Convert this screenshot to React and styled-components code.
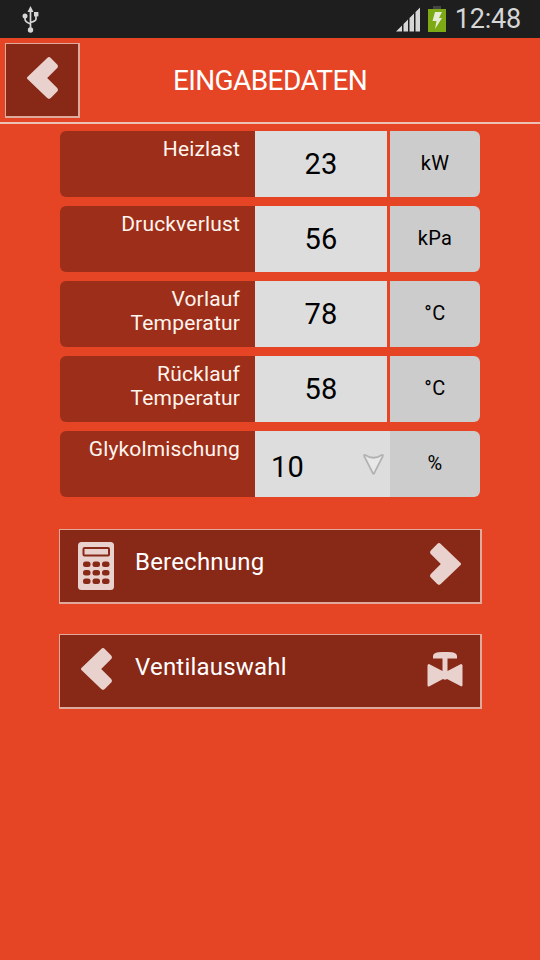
import React, { useState } from "react";
import styled, { createGlobalStyle } from "styled-components";

const GlobalStyle = createGlobalStyle`
  body {
    margin: 0;
    background-color: #e54525;
    font-family: Roboto, "Liberation Sans", sans-serif;
  }
`;

const Screen = styled.div`
  width: 540px;
  height: 960px;
  overflow: hidden;
  background-color: #e54525;
`;

const StatusBar = styled.div`
  display: flex;
  align-items: center;
  height: 38px;
  box-sizing: border-box;
  padding: 0 19px 0 22px;
  background-color: #1e1e1e;
  color: #d6d6d6;
`;

const StatusIcons = styled.div`
  display: flex;
  gap: 8px;
  margin-left: auto;
`;

const Clock = styled.span`
  margin-left: 9px;
  font-size: 27px;
  line-height: 38px;
  letter-spacing: -0.2px;
`;

const Header = styled.header`
  display: grid;
  grid-template-columns: 75px 1fr 75px;
  height: 86px;
  box-sizing: border-box;
  padding: 5px 5px 0;
  border-bottom: 2px solid #ecc0b4;
`;

const Title = styled.h1`
  margin: 0;
  color: #ffffff;
  font-size: 28px;
  font-weight: 400;
  line-height: 75px;
  text-align: center;
  letter-spacing: -0.6px;
`;

const BoxButton = styled.button`
  display: flex;
  align-items: center;
  box-sizing: border-box;
  height: 75px;
  padding: 0;
  border: solid #dfa99c;
  border-width: 1px 2px 2px 1px;
  background-color: #882817;
  color: #ffffff;
  font-family: inherit;
  cursor: pointer;
`;

const BackButton = styled(BoxButton)`
  width: 75px;
  padding: 0 0 4px 21px;
`;

const NavButton = styled(BoxButton)`
  width: 423px;
  padding: 0 16px 0 17px;
`;

const NavIcon = styled.span`
  display: flex;
  justify-content: center;
  width: 38px;
  padding-bottom: ${(props) => props.$lift || "0"};
`;

const NavLabel = styled.span`
  flex: 1;
  padding: 0 0 9px 20px;
  font-size: 24px;
  line-height: 30px;
  text-align: left;
  letter-spacing: 0.2px;
`;

const Form = styled.div`
  display: flex;
  flex-direction: column;
  gap: 9px;
  width: 420px;
  margin: 7px auto 0;
`;

const Row = styled.div`
  display: grid;
  grid-template-columns: 195px 1fr 90px;
  height: 66px;
  border-radius: 6px;
  overflow: hidden;
`;

const Label = styled.label`
  padding: 6px 15px 0 20px;
  background-color: #9d2f1a;
  color: #fff5ee;
  font-size: 21px;
  line-height: 24px;
  text-align: right;
  letter-spacing: 0.17px;
  white-space: pre-line;
`;

const Value = styled.div`
  display: flex;
  align-items: center;
  justify-content: ${(props) => (props.$select ? "space-between" : "center")};
  box-sizing: border-box;
  margin-right: ${(props) => (props.$select ? "0" : "3px")};
  padding: ${(props) => (props.$select ? "5px 6px 0 16px" : "0")};
  background-color: #dddddd;
  color: #000000;
  font-size: 29px;
  letter-spacing: 0.3px;
`;

const Unit = styled.div`
  background-color: #cccccc;
  color: #000000;
  font-size: 20px;
  line-height: 64px;
  text-align: center;
  letter-spacing: 0.4px;
`;

const Actions = styled.div`
  display: flex;
  flex-direction: column;
  align-items: flex-start;
  gap: 30px;
  margin: 32px 0 0 59px;
`;

const Chevron = ({ right }) => (
  <svg width="31" height="42" viewBox="0 0 31 42">
    <path
      transform={right ? "translate(31 0) scale(-1 1)" : undefined}
      d="M.4 20 20.2.9Q22 -.7 23.8.9L30.2 7.400Q31.7 9.200 30.2 11L20.200 21 30.2 31Q31.7 32.800 30.2 34.600L23.8 41.1Q22 42.7 20.2 41.1L.4 22Q-.5 21 .4 20Z"
      fill="#e9d2cd"
    />
  </svg>
);

const Calculator = () => (
  <svg width="36" height="48" viewBox="0 0 36 48">
    <rect width="36" height="48" rx="3.5" fill="#e9d2cd" />
    <rect x="5.5" y="6" width="25.5" height="7.5" rx="1" fill="none" stroke="#882817" strokeWidth="2" />
    {[19.5, 28, 36.5].map((y) =>
      [5, 14.5, 24].map((x) => (
        <rect key={`${x}-${y}`} x={x} y={y} width="7.5" height="5.5" rx="2.5" fill="#882817" />
      ))
    )}
  </svg>
);

const Valve = () => (
  <svg width="36" height="36" viewBox="0 0 36 36">
    <path
      fill="#e9d2cd"
      d="M6 6.5V4Q6.500 .8 11 .3 18 -.4 25 .3 29.500 .8 30 4V6.500H20.500V19L34 12Q35.500 12 35.500 13.500V33Q35.500 34.800 34 34.300L20 27Q18 28.500 16 27L2 34.500Q.5 35 .5 33V13.500Q.5 12 2 12L15.500 19V6.500Z"
    />
  </svg>
);

const UsbIcon = () => (
  <svg width="17" height="27" viewBox="0 0 17 27" fill="none" stroke="#d6d6d6" strokeWidth="1.7">
    <path d="M8.500 3V24M3 9V13Q3 16 8.500 18M14 8V13Q14 15 8.500 16.500" />
    <g fill="#d6d6d6" stroke="none">
      <path d="M8.500 0 11.500 6H5.500Z" />
      <circle cx="3" cy="10" r="2.500" />
      <rect x="12" y="6" width="4.400" height="4.400" />
      <circle cx="8.500" cy="24" r="2.700" />
    </g>
  </svg>
);

const SignalIcon = () => (
  <svg width="24" height="26" viewBox="0 -1.500 24 26" fill="#d6d6d6">
    <path d="M0 24 6 18V24H0ZM7.500 16.500 12 12V24H7.500ZM13.500 10.500 18 6V24H13.500ZM19.500 4.500 24 0V24H19.500Z" />
  </svg>
);

const BatteryIcon = () => (
  <svg width="18" height="26" viewBox="0 0 18 26">
    <rect x="5" width="8" height="3" fill="#444444" />
    <rect y="3" width="18" height="23" fill="#7da915" />
    <path d="M7 6 14 6 11 12H14L7 23 8.500 15H4.500Z" fill="#e6ecd5" />
  </svg>
);

const DropArrow = () => (
  <svg width="21" height="27" viewBox="0 0 21 27">
    <path
      d="M2.200 2 Q10.500 7.500 18.800 2 20.300 1.600 19.700 3.300L11.200 20.200Q10.500 21.300 9.800 20.200L1.300 3.300Q.7 1.600 2.200 2Z"
      fill="#e8e8e8"
      stroke="#b2b2b2"
      strokeWidth="1.800"
      strokeLinejoin="round"
    />
  </svg>
);

const fields = [
  { label: "Heizlast", value: "23", unit: "kW" },
  { label: "Druckverlust", value: "56", unit: "kPa" },
  { label: "Vorlauf\nTemperatur", value: "78", unit: "°C" },
  { label: "Rücklauf\nTemperatur", value: "58", unit: "°C" },
  { label: "Glykolmischung", value: "10", unit: "%", select: true },
];

const App = () => {
  const [data] = useState(fields);

  return (
    <Screen>
      <GlobalStyle />
      <StatusBar>
        <UsbIcon />
        <StatusIcons>
          <SignalIcon />
          <BatteryIcon />
        </StatusIcons>
        <Clock>12:48</Clock>
      </StatusBar>
      <Header>
        <BackButton aria-label="Zurück">
          <Chevron />
        </BackButton>
        <Title>EINGABEDATEN</Title>
      </Header>
      <Form>
        {data.map((field) => (
          <Row key={field.label}>
            <Label>{field.label}</Label>
            <Value $select={field.select}>
              {field.value}
              {field.select && <DropArrow />}
            </Value>
            <Unit>{field.unit}</Unit>
          </Row>
        ))}
      </Form>
      <Actions>
        <NavButton>
          <NavIcon>
            <Calculator />
          </NavIcon>
          <NavLabel>Berechnung</NavLabel>
          <NavIcon $lift="4px">
            <Chevron right />
          </NavIcon>
        </NavButton>
        <NavButton>
          <NavIcon $lift="4px">
            <Chevron />
          </NavIcon>
          <NavLabel>Ventilauswahl</NavLabel>
          <NavIcon $lift="3px">
            <Valve />
          </NavIcon>
        </NavButton>
      </Actions>
    </Screen>
  );
};

export default App;
